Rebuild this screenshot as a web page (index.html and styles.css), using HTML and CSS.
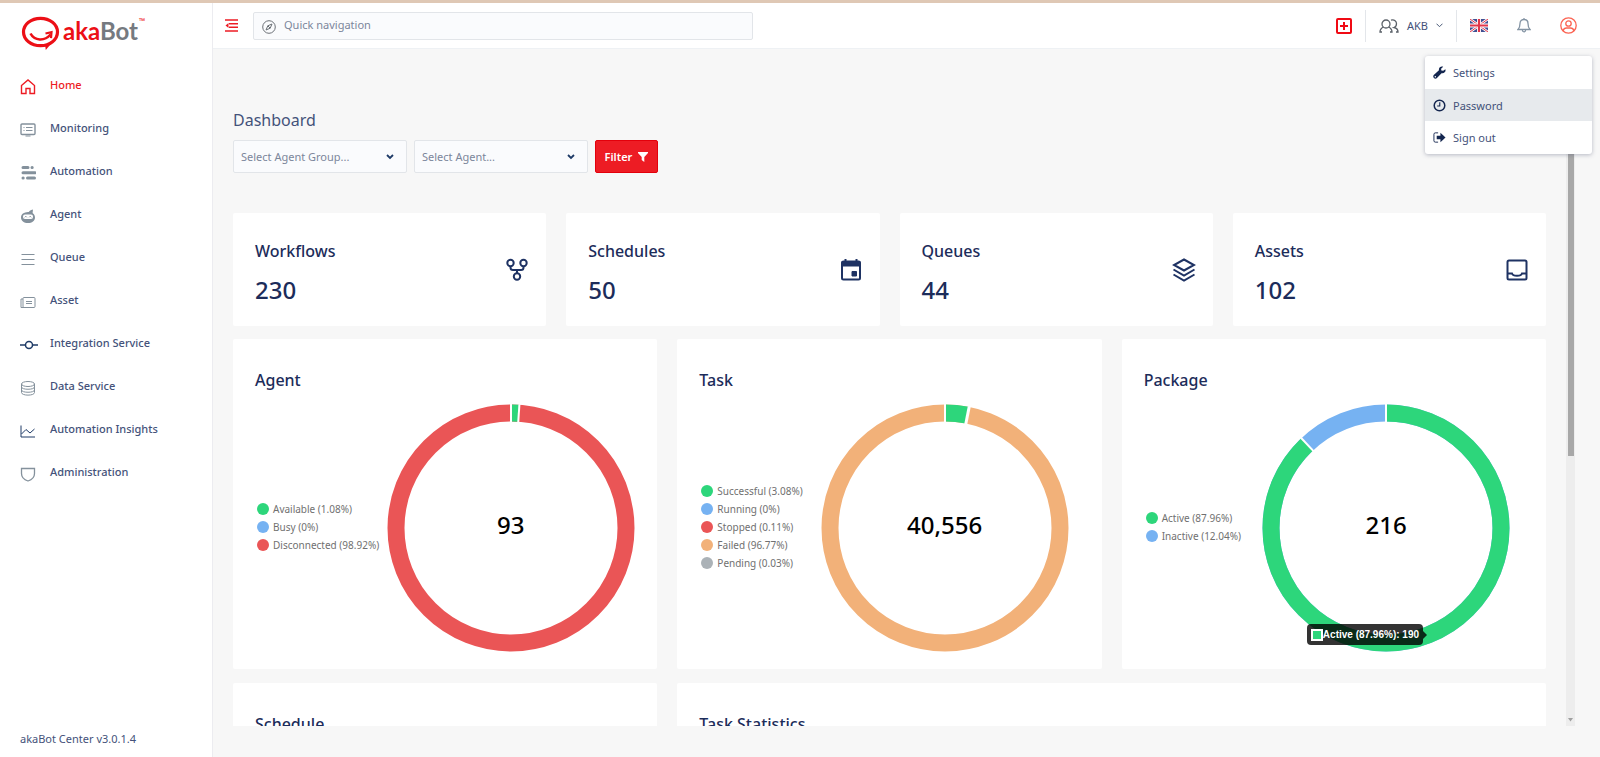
FILE: index.html
```html
<!DOCTYPE html>
<html lang="en">
<head>
    <meta charset="UTF-8">
    <meta name="viewport" content="width=device-width, initial-scale=1.0">
    <title>akaBot Center</title>
    <link rel="stylesheet" href="styles.css">
</head>
<body>
    <!-- Sidebar -->
    <aside class="sidebar">
        <a href="#" class="logo">
            <svg width="40" height="36" viewBox="0 0 40 36" fill="none" stroke="#ec0f16">
                <ellipse cx="19.500" cy="17" rx="17" ry="13.700" stroke-width="3.200"/>
                <path d="M24 29.500l.8 5.500 5-6z" fill="#ec0f16" stroke="none"/>
                <path d="M9.500 18.500c4 7.500 14 8 20 1" stroke-width="2.600"/>
                <path d="M24.500 18.500l6-1.300-.5 6" stroke-width="2.200"/>
            </svg>
            <span class="logo-text">aka<span>Bot</span></span>
            <sup>™</sup>
        </a>
        <nav class="menu">
            <a href="#" class="active">
                <svg viewBox="0 0 16 16"><path d="M1.500 6.500L8 1l6.500 5.500V14.500H10V9.500H6v5H1.500z" stroke-width="1.400"/></svg>
                Home
            </a>
            <a href="#">
                <svg viewBox="0 0 16 16"><rect x="1" y="2" width="14" height="10.500" rx="1" stroke-width="1.400"/><path d="M3.500 5.500h1M6 5.500h6.500M3.500 8.500h1M6 8.500h6.500M5.500 14h5"/></svg>
                Monitoring
            </a>
            <a href="#">
                <svg viewBox="0 0 16 16" stroke-width="3" stroke-linecap="round"><path d="M3 2.500h5M12 2.500h.2M3 7.800h12M3 13h.2M7.500 13h7"/></svg>
                Automation
            </a>
            <a href="#">
                <svg viewBox="0 0 16 16"><path d="M8 4c4-.2 7 2 7 5.500S12 15 8 15s-7-2-7-5.500S4 4.200 8 4z" fill="currentColor" stroke="none"/><path d="M8.500 5c.2-2 2-3 4.500-3.500l-.5 4" fill="currentColor" stroke="none"/><rect x="3" y="6.500" width="10" height="4.500" rx="2" fill="#fff" stroke="none"/><path d="M4.800 9.300l1-1 1 1M9.200 9.300l1-1 1 1"/></svg>
                Agent
            </a>
            <a href="#">
                <svg viewBox="0 0 16 16"><path d="M1.500 3.500h13M1.500 8.500h13M1.500 13.500h13"/></svg>
                Queue
            </a>
            <a href="#">
                <svg viewBox="0 0 16 16"><rect x="3" y="3.500" width="12" height="10" rx="1"/><path d="M3 5H1v8.500h3M6 7.500h6M6 9.500h6"/></svg>
                Asset
            </a>
            <a href="#" class="dark">
                <svg class="wide" viewBox="0 0 18 16" stroke-width="1.500"><circle cx="9" cy="8" r="3.500"/><path d="M0 8h5.500M12.500 8H18"/></svg>
                Integration Service
            </a>
            <a href="#">
                <svg viewBox="0 0 16 16"><ellipse cx="8" cy="4" rx="6.500" ry="2.500"/><path d="M1.500 4v8.500C1.500 16 14.500 16 14.500 12.500V4M1.500 7c0 3 13 3 13 0M1.500 10c0 3 13 3 13 0"/></svg>
                Data Service
            </a>
            <a href="#" class="dark">
                <svg viewBox="0 0 16 16"><path d="M1 2.500v11.500h14M1.500 11L6 6.500l4 3.500 4.500-4"/></svg>
                Automation Insights
            </a>
            <a href="#">
                <svg viewBox="0 0 16 16"><path d="M1.500 2.500h13v5c0 4-3.500 6.500-6.500 7.500-3-1-6.500-3.500-6.500-7.500z" stroke-width="1.300"/></svg>
                Administration
            </a>
        </nav>
        <div class="version">akaBot Center v3.0.1.4</div>
    </aside>

    <div class="page">
        <!-- Top bar -->
        <header class="topbar">
            <button type="button" class="icon-btn toggle" aria-label="Collapse menu">
                <svg width="13" height="13" viewBox="0 0 13 13" fill="none" stroke="#ed1c24" stroke-width="1.400"><path d="M0 1h13M4 4.700h9M4 8.300h9M0 12h13"/><path d="M3.500 4v5L.5 6.500z" fill="#ed1c24" stroke="none"/></svg>
            </button>
            <label class="search">
                <svg width="14" height="14" viewBox="0 0 14 14" fill="none" stroke="#6b7076"><circle cx="7" cy="7" r="6.300"/><path d="M10 4L8.200 8.200 4 10l1.800-4.200zM5.800 5.800l2.400 2.400"/></svg>
                <input type="text" placeholder="Quick navigation" aria-label="Quick navigation">
            </label>
            <div class="actions">
                <button type="button" class="icon-btn add" aria-label="Add">
                    <svg width="16" height="16" viewBox="0 0 16 16" fill="none" stroke="#f00a14" stroke-width="2"><rect x="1" y="1" width="14" height="14" rx="1"/><path d="M8 4v8M4 8h8"/></svg>
                </button>
                <button type="button" class="tenant">
                    <svg width="20" height="14" viewBox="0 0 20 14" fill="none" stroke="#5a6068" stroke-width="1.300"><circle cx="7" cy="5" r="4"/><path d="M3 13H1c0-2.500 1.500-4 3.500-5M9.500 8c2 1 3.500 2.500 3.500 5h-2M12 1.200c3.500-1 5.500 1.300 5.500 3.500 0 2-1.200 3.300-2.500 3.800 2.500.5 4 2 4 4.500h-2"/></svg>
                    AKB
                    <svg width="7" height="5" viewBox="0 0 7 5" fill="none" stroke="#4a5a78"><path d="M.5.700l3 3 3-3"/></svg>
                </button>
                <button type="button" class="icon-btn" aria-label="English">
                    <svg width="18" height="13" viewBox="0 0 18 13"><path fill="#3f4f92" d="M0 0h18v13H0z"/><path d="M0 0l18 13M18 0L0 13" stroke="#fff" stroke-width="2.600"/><path d="M0 0l18 13M18 0L0 13" stroke="#e2364a"/><path d="M9 0v13M0 6.500h18" stroke="#fff" stroke-width="4"/><path d="M9 0v13M0 6.500h18" stroke="#e2364a" stroke-width="2.200"/></svg>
                </button>
                <button type="button" class="icon-btn" aria-label="Notifications">
                    <svg width="14" height="15" viewBox="0 0 14 15" fill="none" stroke="#8494a4" stroke-width="1.300"><path d="M1 11.500c1.500-1.500 2-3 2-6C3 3 4.700 1.500 7 1.500S11 3 11 5.500c0 3 .5 4.500 2 6zM5.300 12c.2 2.400 3.200 2.400 3.400 0M7 0v1.500"/></svg>
                </button>
                <button type="button" class="icon-btn" aria-label="Account">
                    <svg width="17" height="17" viewBox="0 0 17 17" fill="none" stroke="#fb6352" stroke-width="1.300"><circle cx="8.500" cy="8.500" r="7.700"/><circle cx="8.500" cy="6.500" r="2.700"/><path d="M3.200 13.800c.5-2.300 2-2.800 3.300-2.800h4c1.300 0 2.800.5 3.300 2.800"/></svg>
                </button>
            </div>
            <!-- Account menu -->
            <div class="dropdown">
                <a href="#">
                    <svg viewBox="0 0 14 14"><path d="M13.300 3.400L11 5.200 9 4.800 8.700 3 11 .7C8.800-.2 6 1.300 6.400 4.500L.8 9.800c-1.800 2 1.200 5 3.200 3.300l5.200-5.400c3 .6 5-1.700 4.100-4.300zM2.500 12.300a.8.8 0 110-1.600.8.8 0 010 1.600z" fill="#14264f"/></svg>
                    Settings
                </a>
                <a href="#" class="hover">
                    <svg viewBox="0 0 14 14" fill="none" stroke="#14264f"><circle cx="7" cy="7" r="5.700" stroke-width="1.600"/><path d="M7.300 3.500v4H4.500" stroke-width="1.200"/></svg>
                    Password
                </a>
                <a href="#">
                    <svg viewBox="0 0 14 14"><path d="M5.500 2H2.500C1.500 2 1 2.500 1 3.500v7c0 1 .5 1.500 1.500 1.500h3" fill="none" stroke="#14264f"/><path d="M4 5h4V2l5.500 5L8 12V9H4z" fill="#14264f"/></svg>
                    Sign out
                </a>
            </div>
        </header>

        <main class="scroll-area">
            <div class="content">
                <h1>Dashboard</h1>
                <form class="filters">
                    <div class="select">
                        <select aria-label="Agent group"><option>Select Agent Group...</option></select>
                        <svg viewBox="0 0 8 6"><path d="M1 1l3 3 3-3"/></svg>
                    </div>
                    <div class="select">
                        <select aria-label="Agent"><option>Select Agent...</option></select>
                        <svg viewBox="0 0 8 6"><path d="M1 1l3 3 3-3"/></svg>
                    </div>
                    <button type="button" class="filter-btn">
                        Filter
                        <svg width="10" height="10" viewBox="0 0 10 10"><path d="M0 0h10v1L6.300 5v5L3.700 8V5L0 1z" fill="#fff"/></svg>
                    </button>
                </form>

                <!-- Totals -->
                <section class="stats">
                    <div class="card stat">
                        <div class="total"><h2>Workflows</h2><p>230</p></div>
                        <svg viewBox="0 0 24 24"><circle cx="5.500" cy="5" r="3.200"/><circle cx="18.500" cy="5" r="3.200"/><circle cx="12" cy="18.500" r="3.200"/><path d="M5.500 8.500v1c0 2 1 2.500 2.500 2.500h8c1.500 0 2.500-.5 2.500-2.500v-1M12 12v3"/></svg>
                    </div>
                    <div class="card stat">
                        <div class="total"><h2>Schedules</h2><p>50</p></div>
                        <svg viewBox="0 0 24 24"><rect x="3" y="3.500" width="18" height="18" rx="1.500"/><path d="M3 3.500h18V8H3zM13 13.500h4.500V18H13z" fill="currentColor" stroke-width="1"/><path d="M6.500 1v3M17.500 1v3"/></svg>
                    </div>
                    <div class="card stat">
                        <div class="total"><h2>Queues</h2><p>44</p></div>
                        <svg viewBox="0 0 24 24"><path d="M12 1.500L22 7l-10 5.500L2 7zM1.500 11.500L12 17.500l10.500-6M1.500 16.500L12 22.500l10.500-6"/></svg>
                    </div>
                    <div class="card stat">
                        <div class="total"><h2>Assets</h2><p>102</p></div>
                        <svg viewBox="0 0 24 24"><rect x="2.500" y="2.500" width="19" height="19" rx="1.500"/><path d="M2.500 15.500H7c1 3 9 3 10 0h4.500"/></svg>
                    </div>
                </section>

                <!-- Charts -->
                <section class="charts">
                    <div class="card chart">
                        <h2>Agent</h2>
                        <div class="chart-body">
                            <ul class="legend">
                                <li class="green">Available (1.08%)</li>
                                <li class="blue">Busy (0%)</li>
                                <li class="red">Disconnected (98.92%)</li>
                            </ul>
                            <div class="donut">
                                <svg viewBox="0 0 248 248">
                                    <g transform="rotate(-90 124 124)" class="ring">
                                        <circle cx="124" cy="124" r="115" class="c-red"/>
                                        <circle cx="124" cy="124" r="115" class="c-green" pathLength="10000" stroke-dasharray="108 10000"/>
                                    </g>
                                    <path class="gap" d="M124 0v20"/><path class="gap" d="M124 0v20" transform="rotate(3.900 124 124)"/>
                                </svg>
                                <strong>93</strong>
                            </div>
                        </div>
                    </div>
                    <div class="card chart">
                        <h2>Task</h2>
                        <div class="chart-body">
                            <ul class="legend">
                                <li class="green">Successful (3.08%)</li>
                                <li class="blue">Running (0%)</li>
                                <li class="red">Stopped (0.11%)</li>
                                <li class="orange">Failed (96.77%)</li>
                                <li class="grey">Pending (0.03%)</li>
                            </ul>
                            <div class="donut">
                                <svg viewBox="0 0 248 248">
                                    <g transform="rotate(-90 124 124)" class="ring">
                                        <circle cx="124" cy="124" r="115" class="c-orange"/>
                                        <circle cx="124" cy="124" r="115" class="c-green" pathLength="10000" stroke-dasharray="308 10000"/>
                                    </g>
                                    <path class="gap" d="M124 0v20"/><path class="gap thick" d="M124 0v20" transform="rotate(11.300 124 124)"/>
                                </svg>
                                <strong>40,556</strong>
                            </div>
                        </div>
                    </div>
                    <div class="card chart">
                        <h2>Package</h2>
                        <div class="chart-body">
                            <ul class="legend">
                                <li class="green">Active (87.96%)</li>
                                <li class="blue">Inactive (12.04%)</li>
                            </ul>
                            <div class="donut">
                                <svg viewBox="0 0 248 248">
                                    <g transform="rotate(-90 124 124)" class="ring">
                                        <circle cx="124" cy="124" r="115" class="c-blue"/>
                                        <circle cx="124" cy="124" r="115" class="c-green" pathLength="10000" stroke-dasharray="8796 10000"/>
                                    </g>
                                    <path class="gap" d="M124 0v20"/><path class="gap" d="M124 0v20" transform="rotate(-43.300 124 124)"/>
                                </svg>
                                <strong>216</strong>
                                <div class="tooltip"><i></i>Active (87.96%): 190</div>
                            </div>
                        </div>
                    </div>
                    <div class="card chart"><h2>Schedule</h2></div>
                    <div class="card chart span-2"><h2>Task Statistics</h2></div>
                </section>
            </div>
            <div class="scrollbar"><div class="thumb"></div><svg width="5" height="4" viewBox="0 0 5 4"><path d="M0 0h5L2.500 3.500z" fill="#a0a0a0"/></svg></div>
        </main>
    </div>
</body>
</html>
```

FILE: styles.css
```css
* {
    box-sizing: border-box;
}
body {
    display: flex;
    height: 100vh;
    margin: 0;
    overflow: hidden;
    border-top: 3px solid #dfc8b5;
    background: #f7f7f7;
    font-family: "Noto Sans", "Open Sans", sans-serif;
    font-size: 11px;
    color: #44527a;
}
a {
    color: inherit;
    text-decoration: none;
}
button, input, select {
    font: inherit;
    color: inherit;
}
button {
    padding: 0;
    border: none;
    background: none;
    cursor: pointer;
}
h1, h2, p, ul {
    margin: 0;
    padding: 0;
}

/* Sidebar */
.sidebar {
    display: flex;
    flex-direction: column;
    flex: 0 0 213px;
    background: #fff;
    border-right: 1px solid #ececf0;
}
.logo {
    display: flex;
    align-items: flex-start;
    height: 60px;
    padding: 12px 0 0 21px;
}
.logo-text {
    margin-left: 2px;
    font-family: Lato, sans-serif;
    font-size: 24px;
    font-weight: 700;
    line-height: 32px;
    color: #ec0f16;
}
.logo-text span {
    color: #757a80;
}
.logo sup {
    margin-left: 1px;
    font-size: 8px;
    line-height: 12px;
    color: #ec0f16;
}
.menu a {
    display: flex;
    align-items: center;
    gap: 14px;
    height: 43px;
    padding-left: 20px;
    font-weight: 500;
}
.menu svg {
    width: 16px;
    height: 16px;
    margin-top: 4px;
    fill: none;
    stroke: currentColor;
    color: #84919c;
}
.menu .wide {
    width: 18px;
    margin-right: -2px;
}
.menu .dark svg {
    color: #1e3a66;
}
.menu .active,
.menu .active svg {
    color: #ed1c24;
}
.version {
    margin-top: auto;
    padding: 0 20px 10px;
    line-height: 16px;
}

/* Top bar */
.page {
    display: flex;
    flex-direction: column;
    flex: 1;
    min-width: 0;
}
.topbar {
    position: relative;
    z-index: 2;
    display: flex;
    align-items: center;
    flex: 0 0 46px;
    padding: 0 23px 0 12px;
    background: #fff;
    border-bottom: 1px solid #eef1f4;
}
.icon-btn {
    display: flex;
}
.search {
    display: flex;
    align-items: center;
    gap: 8px;
    width: 500px;
    height: 28px;
    margin-left: 15px;
    padding: 0 8px;
    background: #fafbfd;
    border: 1px solid #e2e5e9;
    border-radius: 2px;
}
.search svg {
    margin-top: 3px;
}
.search input {
    flex: 1;
    min-width: 0;
    padding: 0 0 2px;
    border: none;
    outline: none;
    background: none;
}
.search input::placeholder {
    color: #7c869b;
    opacity: 1;
}
.actions {
    display: flex;
    align-items: center;
    gap: 29px;
    margin-left: auto;
}
.actions .add {
    margin-right: -16px;
}
.tenant {
    display: flex;
    align-items: center;
    gap: 8px;
    height: 32px;
    margin-right: -16px;
    padding: 0 13px;
    border: solid #e3e6ea;
    border-width: 0 1px;
}
.dropdown {
    position: absolute;
    top: 53px;
    right: 8px;
    width: 167px;
    background: #fff;
    border-radius: 3px;
    box-shadow: 0 1px 4px rgba(60, 70, 100, 0.35);
}
.dropdown a {
    display: flex;
    align-items: center;
    gap: 7px;
    height: 33px;
    padding: 0 8px;
}
.dropdown .hover {
    height: 32px;
    background: #e7eaed;
}
.dropdown svg {
    width: 13px;
    height: 13px;
}

/* Content */
.scroll-area {
    display: flex;
    flex: 1;
    gap: 20px;
    min-height: 0;
    margin: 40px 25px 31px 20px;
}
.content {
    flex: 1;
    min-width: 0;
    overflow: hidden;
}
.scrollbar {
    display: flex;
    flex-direction: column;
    align-items: center;
    justify-content: space-between;
    flex: 0 0 9px;
    padding-bottom: 4px;
    background: #ededed;
}
.thumb {
    width: 6px;
    height: 58%;
    background: #a8a8a8;
}
h1 {
    padding-top: 19px;
    font-size: 16px;
    font-weight: 400;
    line-height: 24px;
}
.filters {
    display: flex;
    gap: 7px;
    margin: 8px 0 40px;
}
.select {
    display: grid;
    align-items: center;
    width: 174px;
    height: 33px;
}
.select select {
    grid-area: 1 / 1;
    height: 100%;
    padding: 0 7px;
    appearance: none;
    background: #fafbfd;
    border: 1px solid #e2e5e9;
    border-radius: 2px;
    color: #7c869b;
}
.select svg {
    grid-area: 1 / 1;
    justify-self: end;
    width: 8px;
    height: 6px;
    margin-right: 13px;
    fill: none;
    stroke: #1e3a66;
    stroke-width: 1.8;
    pointer-events: none;
}
.filter-btn {
    display: flex;
    align-items: center;
    justify-content: center;
    gap: 6px;
    width: 63px;
    background: #ed1c24;
    border: 1px solid #e3000b;
    border-radius: 2px;
    font-weight: 600;
    color: #fff;
}

/* Cards */
.card {
    background: #fff;
    border-radius: 2px;
}
.card h2 {
    font-size: 16px;
    font-weight: 500;
    line-height: 24px;
    color: #1c2c5a;
}
.stats {
    display: grid;
    grid-template-columns: repeat(4, 1fr);
    gap: 20px;
    margin-bottom: 13px;
}
.stat {
    display: flex;
    align-items: center;
    justify-content: space-between;
    height: 113px;
    padding: 0 17px 0 22px;
}
.total {
    padding-top: 5px;
}
.total p {
    margin-top: 11px;
    font-size: 24px;
    font-weight: 500;
    line-height: 32px;
    color: #1c2c5a;
}
.stat svg {
    width: 24px;
    height: 24px;
    fill: none;
    stroke: currentColor;
    stroke-width: 2;
    color: #1e3263;
}
.charts {
    display: grid;
    grid-template-columns: repeat(3, minmax(0, 1fr));
    gap: 14px 20px;
}
.chart {
    height: 330px;
    padding: 29px 22px 0;
}
.span-2 {
    grid-column: span 2;
}
.chart-body {
    display: flex;
    align-items: center;
    gap: 7px;
    margin-top: 12px;
}
.legend {
    padding-bottom: 3px;
    list-style: none;
    font-size: 10px;
    line-height: 18px;
    white-space: nowrap;
    color: #707070;
}
.legend li {
    display: flex;
    align-items: center;
    gap: 4px;
    padding-left: 2px;
}
.legend li::before {
    content: "";
    width: 12px;
    height: 12px;
    border-radius: 50%;
    background: currentColor;
}
.legend .green::before { background: #2dd67b; }
.legend .blue::before { background: #76b2f2; }
.legend .red::before { background: #ea5556; }
.legend .orange::before { background: #f2b179; }
.legend .grey::before { background: #abb2b7; }
.donut {
    position: relative;
    display: grid;
    place-items: center;
    width: 248px;
    margin: 0 auto;
}
.donut > svg,
.donut strong {
    grid-area: 1 / 1;
}
.donut > svg {
    width: 100%;
}
.donut strong {
    padding-bottom: 7px;
    font-size: 24px;
    font-weight: 500;
    color: #000;
}
.ring {
    fill: none;
    stroke-width: 17;
}
.c-green { stroke: #2dd67b; }
.c-blue { stroke: #76b2f2; }
.c-red { stroke: #ea5556; }
.c-orange { stroke: #f2b179; }
.gap {
    stroke: #fff;
    stroke-width: 2;
}
.gap.thick {
    stroke-width: 3;
}
.tooltip {
    position: absolute;
    right: 87px;
    bottom: 7px;
    display: flex;
    align-items: center;
    height: 21px;
    padding: 0 4px;
    background: rgba(0, 0, 0, 0.8);
    border-radius: 4px;
    font-family: "Liberation Sans", Arial, sans-serif;
    font-size: 10px;
    font-weight: 700;
    white-space: nowrap;
    color: #fff;
}
.tooltip::after {
    content: "";
    position: absolute;
    left: 100%;
    border: solid transparent;
    border-width: 4px 0 4px 4px;
    border-left-color: rgba(0, 0, 0, 0.8);
}
.tooltip i {
    width: 12px;
    height: 12px;
    background: #2dd67b;
    border: 2px solid #fff;
}
```
